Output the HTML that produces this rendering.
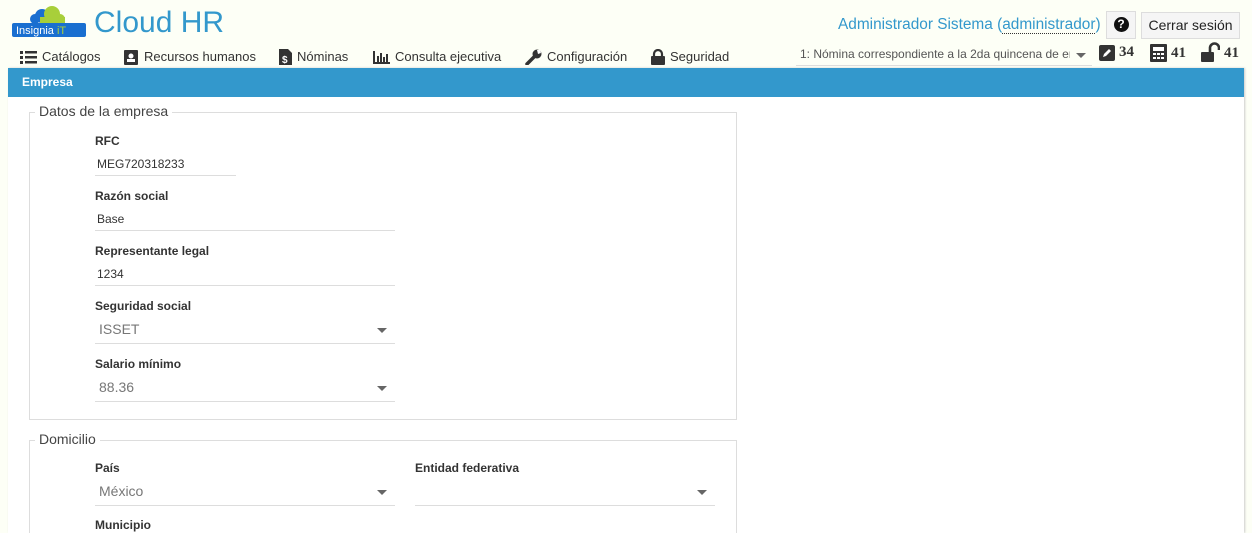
<!DOCTYPE html>
<html><head><meta charset="utf-8"><style>
*{box-sizing:border-box;margin:0;padding:0}
html,body{width:1252px;height:533px;overflow:hidden}
body{background:#fdfff6;font-family:"Liberation Sans",sans-serif;position:relative;color:#333}
.a{position:absolute}
.nav{font-size:13px;color:#333;top:48px;height:18px;line-height:18px;display:flex;align-items:center;gap:5px}
.panel{left:8px;top:68px;width:1236px;height:465px;background:#fff;box-shadow:1px 0 2px #ccc;overflow:hidden}
.hdr{left:0;top:0;width:1236px;height:29px;background:#3398cc;color:#fff;font-weight:bold;font-size:12px;line-height:29px;padding-left:14px}
.fs{border:1px solid #ddd}
.lg{background:#fff;padding:0 4px;font-size:14px;color:#444}
.lbl{font-size:12px;font-weight:bold;color:#333}
.val{font-size:12px;color:#333}
.sel{font-size:14px;color:#777}
.ln{height:1px;background:#ddd}
.tri{width:0;height:0;border-left:5px solid transparent;border-right:5px solid transparent;border-top:5px solid #666}
</style></head><body>
<svg class="a" style="left:12px;top:4px" width="76" height="34" viewBox="0 0 76 34">
<circle cx="30" cy="12" r="7" fill="#1a6fd0"/><circle cx="23" cy="15" r="5" fill="#1a6fd0"/>
<circle cx="40" cy="10" r="8" fill="#a8cf3a"/><circle cx="48" cy="15" r="5" fill="#a8cf3a"/><rect x="28" y="13" width="25" height="7" fill="#a8cf3a"/>
<rect x="0" y="19" width="74" height="14" rx="2" fill="#1a6fd0"/>
<text x="4" y="30" font-family="Liberation Sans" font-size="11" fill="#fff">Insignia <tspan fill="#a8cf3a">iT</tspan></text>
</svg>
<div class="a" style="left:94px;top:6px;font-size:30px;color:#3398cc">Cloud HR</div>
<div class="a" style="left:838px;top:16px;font-size:15.4px;color:#3398cc">Administrador Sistema (<span style="border-bottom:1px dotted #333">administrador</span>)</div>
<div class="a" style="left:1106px;top:11px;width:30px;height:28px;border:1px solid #ddd;background:#f5f5f5;text-align:center;line-height:26px"><span style="display:inline-block;width:15px;height:15px;border-radius:50%;background:#111;color:#fff;font-weight:bold;font-size:12px;line-height:15px;vertical-align:middle">?</span></div>
<div class="a" style="left:1141px;top:12px;width:99px;height:27px;border:1px solid #ddd;background:#f5f5f5;font-size:14px;line-height:25px;text-align:center;color:#222">Cerrar sesión</div>

<div class="a nav" style="left:20px"><svg width="17" height="14"><rect x="0" y="1" width="3" height="3" fill="#333"/><rect x="5" y="1" width="12" height="2.5" fill="#333"/><rect x="0" y="6" width="3" height="3" fill="#333"/><rect x="5" y="6" width="12" height="2.5" fill="#333"/><rect x="0" y="11" width="3" height="3" fill="#333"/><rect x="5" y="11" width="12" height="2.5" fill="#333"/></svg>Catálogos</div>
<div class="a nav" style="left:124px"><svg width="15" height="15"><rect x="0" y="0" width="14" height="15" rx="1" fill="#333"/><circle cx="7" cy="6" r="2.5" fill="#fff"/><rect x="3" y="9" width="8" height="3" fill="#fff"/></svg>Recursos humanos</div>
<div class="a nav" style="left:279px"><svg width="13" height="16"><path d="M0 0H9L13 4V16H0Z" fill="#333"/><text x="3" y="14" font-size="10" font-weight="bold" fill="#fff" font-family="Liberation Sans">$</text></svg>Nóminas</div>
<div class="a nav" style="left:373px"><svg width="17" height="14"><path d="M1 1V13H17" stroke="#333" stroke-width="2" fill="none"/><rect x="4" y="6" width="2" height="6" fill="#333"/><rect x="7" y="3" width="2" height="9" fill="#333"/><rect x="10" y="7" width="2" height="5" fill="#333"/><rect x="13" y="4" width="2" height="8" fill="#333"/></svg>Consulta ejecutiva</div>
<div class="a nav" style="left:525px"><svg width="17" height="16"><path d="M2 15L9 8" stroke="#333" stroke-width="3.5" stroke-linecap="round"/><circle cx="12" cy="5" r="4.5" fill="#333"/><path d="M12 1L15 1L16 4L13 5Z" fill="#fff"/></svg>Configuración</div>
<div class="a nav" style="left:651px"><svg width="14" height="16"><path d="M3 7V5A4 4 0 0 1 11 5V7" stroke="#333" stroke-width="2.2" fill="none"/><rect x="0" y="7" width="14" height="9" rx="1" fill="#333"/></svg>Seguridad</div>

<div class="a" style="left:796px;top:44px;width:296px;height:22px;border-bottom:1px solid #ddd;font-size:12px;color:#555;line-height:20px;padding-left:4px;white-space:nowrap;overflow:hidden"><span style="display:inline-block;width:270px;overflow:hidden">1: Nómina correspondiente a la 2da quincena de en</span></div>
<div class="a tri" style="left:1076px;top:53px"></div>
<div class="a" style="left:1099px;top:44px;font-family:'Liberation Serif',serif;font-weight:bold;font-size:15px;color:#333;display:flex;align-items:center;gap:4px"><svg width="16" height="16"><rect width="16" height="16" rx="2" fill="#333"/><path d="M4 12L5 9L10 4L12 6L7 11Z" fill="#fff"/></svg>34</div>
<div class="a" style="left:1150px;top:44px;font-family:'Liberation Serif',serif;font-weight:bold;font-size:15px;color:#333;display:flex;align-items:center;gap:4px"><svg width="17" height="18"><rect width="17" height="18" rx="1" fill="#333"/><rect x="3" y="3" width="11" height="4" fill="#fff"/><rect x="3" y="9" width="3" height="2" fill="#fff"/><rect x="7" y="9" width="3" height="2" fill="#fff"/><rect x="11" y="9" width="3" height="2" fill="#fff"/><rect x="3" y="13" width="3" height="2" fill="#fff"/><rect x="7" y="13" width="3" height="2" fill="#fff"/><rect x="11" y="13" width="3" height="2" fill="#fff"/></svg>41</div>
<div class="a" style="left:1201px;top:42px;font-family:'Liberation Serif',serif;font-weight:bold;font-size:15px;color:#333;display:flex;align-items:flex-end;gap:4px"><svg width="19" height="20"><path d="M9 10V6A4.5 4.5 0 0 1 18 6V8" stroke="#333" stroke-width="2.6" fill="none"/><rect x="0" y="10" width="13" height="10" rx="1" fill="#333"/></svg>41</div>

<div class="a panel">
<div class="a hdr">Empresa</div>
<div class="a fs" style="left:21px;top:44px;width:708px;height:308px"></div>
<div class="a lg" style="left:27px;top:35px">Datos de la empresa</div>
<div class="a fs" style="left:21px;top:372px;width:708px;height:93px;border-bottom:none"></div>
<div class="a lg" style="left:27px;top:363px">Domicilio</div>

<div class="a lbl" style="left:87px;top:66px">RFC</div>
<div class="a val" style="left:89px;top:89px">MEG720318233</div>
<div class="a ln" style="left:87px;top:107px;width:141px"></div>

<div class="a lbl" style="left:87px;top:121px">Razón social</div>
<div class="a val" style="left:89px;top:144px">Base</div>
<div class="a ln" style="left:87px;top:162px;width:300px"></div>

<div class="a lbl" style="left:87px;top:176px">Representante legal</div>
<div class="a val" style="left:89px;top:199px">1234</div>
<div class="a ln" style="left:87px;top:217px;width:300px"></div>

<div class="a lbl" style="left:87px;top:231px">Seguridad social</div>
<div class="a sel" style="left:91px;top:253px">ISSET</div>
<div class="a tri" style="left:369px;top:260px"></div>
<div class="a ln" style="left:87px;top:275px;width:300px"></div>

<div class="a lbl" style="left:87px;top:289px">Salario mínimo</div>
<div class="a sel" style="left:91px;top:311px">88.36</div>
<div class="a tri" style="left:369px;top:318px"></div>
<div class="a ln" style="left:87px;top:333px;width:300px"></div>

<div class="a lbl" style="left:87px;top:393px">País</div>
<div class="a sel" style="left:91px;top:415px">México</div>
<div class="a tri" style="left:369px;top:422px"></div>
<div class="a ln" style="left:87px;top:437px;width:300px"></div>

<div class="a lbl" style="left:407px;top:393px">Entidad federativa</div>
<div class="a tri" style="left:689px;top:422px"></div>
<div class="a ln" style="left:407px;top:437px;width:300px"></div>

<div class="a lbl" style="left:87px;top:450px;line-height:14px">Municipio</div>
</div>
</body></html>
